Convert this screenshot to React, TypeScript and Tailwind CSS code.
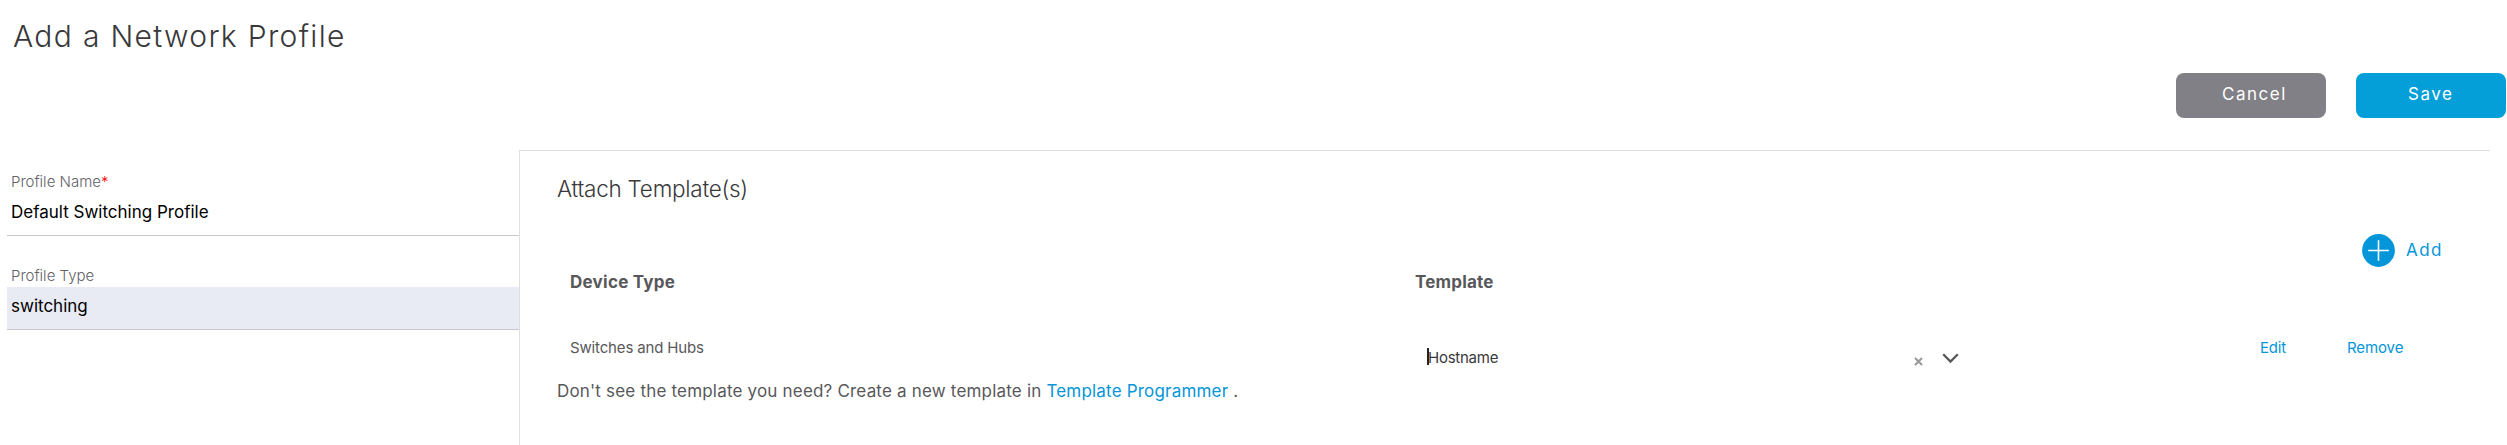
function PlusCircle() {
  return (
    <svg className="size-[33px] shrink-0" viewBox="0 0 33 33" aria-hidden="true">
      <circle cx="16.5" cy="16.5" r="16.4" fill="#0496d8" />
      <path d="M16.5 6.2v20.6M6.2 16.5h20.6" stroke="#fff" strokeWidth="1.6" />
    </svg>
  );
}

function Chevron() {
  return (
    <svg className="mt-[10px] ml-[19px] h-[12px] w-[17px] shrink-0" viewBox="0 0 17 12" fill="none" aria-hidden="true">
      <path d="M1.2 1.2L8.5 8.6L15.8 1.2" stroke="#58585b" strokeWidth="2.3" />
    </svg>
  );
}

function Clear() {
  return (
    <svg className="mt-[14px] ml-px size-[9px] shrink-0" viewBox="0 0 9 9" aria-hidden="true">
      <path d="M1 1l7 7M8 1l-7 7" stroke="#999" strokeWidth="2.1" />
    </svg>
  );
}

export default function App() {
  return (
    <div className="flex h-[445px] w-[2507px] flex-col overflow-hidden bg-white font-['Inter',sans-serif] whitespace-nowrap text-[#58585b]">
      <header className="flex h-[150px] flex-col">
        <h1 className="h-[73px] pt-[21px] pl-[13px] text-[30px] leading-[30px] font-[280] tracking-[1.32px] text-[#39393b]">
          Add a Network Profile
        </h1>
        <div className="flex justify-end gap-[30px] pr-px text-[17px] leading-[43px] tracking-[1.5px] text-white">
          <button className="h-[45px] w-[150px] rounded-[8px] bg-[#808086] pb-[2px] pl-[46px] text-left">Cancel</button>
          <button className="h-[45px] w-[150px] rounded-[8px] bg-[#049fd9] pb-[2px] pl-[52px] text-left">Save</button>
        </div>
      </header>
      <main className="flex flex-1">
        <section className="w-[519px] pl-[7px]">
          <label className="mt-[22px] block h-[20px] pl-[4px] text-[15px] leading-[20px] font-light text-[#626267]">
            Profile Name<span className="text-[#f00]">*</span>
          </label>
          <div className="h-[44px] border-b border-[#c8c8cc] pl-[4px] text-[17px] leading-[40px] text-black">
            Default Switching Profile
          </div>
          <label className="mt-[30px] block h-[21px] pl-[4px] text-[15px] leading-[20px] font-light text-[#626267]">
            Profile Type
          </label>
          <div className="h-[43px] border-b border-[#c8c8cc] bg-[#e8ebf3] pl-[4px] text-[17px] leading-[38px] text-black">
            switching
          </div>
        </section>
        <section className="flex w-[1971px] flex-col border-t border-l border-[#dfdfdf] pl-[37px]">
          <h2 className="mt-[23px] h-[30px] text-[22.5px] leading-[30px] font-[290] tracking-[-0.26px] text-[#39393b]">
            Attach Template(s)
          </h2>
          <div className="mt-[30px] flex h-[33px] items-center pl-[1805px] text-[17px] tracking-[1.4px] text-[#0496d8]">
            <PlusCircle />
            <span className="pl-[11px]">Add</span>
          </div>
          <div className="mt-[5px] flex h-[20px] pl-[13px] text-[17px] leading-[20px] font-bold">
            <span className="w-[845px] tracking-[0.25px]">Device Type</span>
            <span className="tracking-[0.2px]">Template</span>
          </div>
          <div className="mt-[45px] flex h-[44px] pl-[13px] text-[15px] leading-[20px]">
            <span className="w-[857px] pt-px tracking-[-0.15px]">Switches and Hubs</span>
            <div className="mt-[6px] flex w-[833px] text-[#39393b]">
              <div className="relative z-10 mt-[5px] -mr-px h-[17px] w-[2px] bg-[#222]" />
              <span className="mt-[5px] w-[485px] tracking-[-0.25px]">Hostname</span>
              <div className="flex">
                <Clear />
                <Chevron />
              </div>
            </div>
            <span className="w-[87px] pt-px tracking-[-0.2px] text-[#0496d8]">Edit</span>
            <span className="pt-px tracking-[-0.1px] text-[#0496d8]">Remove</span>
          </div>
          <p className="h-[20px] text-[17px] leading-[20px] tracking-[0.19px]">
            Don't see the template you need? Create a new template in{" "}
            <a className="text-[#0496d8]">Template Programmer</a> .
          </p>
        </section>
      </main>
    </div>
  );
}
